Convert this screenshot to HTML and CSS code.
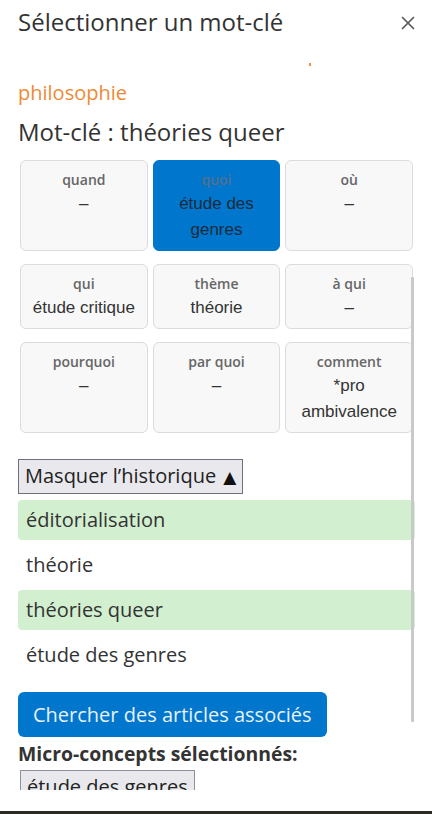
FILE: index.html
```html
<!DOCTYPE html>
<html lang="fr">
<head>
<meta charset="utf-8">
<title>Sélectionner un mot-clé</title>
<link rel="stylesheet" href="styles.css">
</head>
<body>
<div class="modal">
  <div class="header">
    <h1 class="title">Sélectionner un mot-clé</h1>
    <button class="close" aria-label="Fermer">
      <svg width="14" height="14" viewBox="0 0 14 14"><path d="M1.5 1.5 L12.5 12.5 M12.5 1.5 L1.5 12.5" stroke="#5a5a5a" stroke-width="1.7" stroke-linecap="round"/></svg>
    </button>
  </div>
  <div class="body">
    <div class="crumbs"><span class="dot"></span></div>
    <div class="parent">philosophie</div>
    <div class="keyword">Mot-clé : théories queer</div>
    <div class="grid">
      <div class="card"><div class="label">quand</div><div class="value">–</div></div>
      <div class="card selected"><div class="label">quoi</div><div class="value">étude des genres</div></div>
      <div class="card"><div class="label">où</div><div class="value">–</div></div>
      <div class="card"><div class="label">qui</div><div class="value">étude critique</div></div>
      <div class="card"><div class="label">thème</div><div class="value">théorie</div></div>
      <div class="card"><div class="label">à qui</div><div class="value">–</div></div>
      <div class="card"><div class="label">pourquoi</div><div class="value">–</div></div>
      <div class="card"><div class="label">par quoi</div><div class="value">–</div></div>
      <div class="card"><div class="label">comment</div><div class="value">*pro ambivalence</div></div>
    </div>
    <button class="toggle">Masquer l’historique <span class="tri">▲</span></button>
    <ul class="history">
      <li class="hit">éditorialisation</li>
      <li>théorie</li>
      <li class="hit">théories queer</li>
      <li>étude des genres</li>
    </ul>
    <button class="search">Chercher des articles associés</button>
    <div class="micro-title">Micro-concepts sélectionnés:</div>
    <div class="tags"><span class="tag">étude des genres</span></div>
  </div>
  <div class="scrollthumb"></div>
</div>
<div class="backdrop"></div>
</body>
</html>
```
FILE: styles.css
```css
html, body {
  margin: 0;
  padding: 0;
  background: #ffffff;
}
body {
  font-family: "Open Sans", "DejaVu Sans", sans-serif;
  color: #333333;
  width: 432px;
  height: 814px;
  overflow: hidden;
}
.modal {
  position: relative;
  height: 811px;
  background: #ffffff;
}
.header {
  display: flex;
  align-items: center;
  justify-content: space-between;
  padding: 5px 17px 0 18px;
}
.title {
  margin: 0;
  font-size: 24px;
  font-weight: 400;
  line-height: 34px;
  color: #333333;
}
.close {
  border: 0;
  background: transparent;
  padding: 0;
  width: 14px;
  height: 14px;
  display: flex;
  margin-top: 1px;
}
.body {
  padding: 0 17px 0 18px;
  height: 751px;
  overflow: hidden;
}
.crumbs {
  height: 39px;
  display: flex;
  align-items: flex-start;
}
.dot {
  display: block;
  width: 2px;
  height: 3px;
  background: #f0913f;
  margin: 24px 0 0 291px;
}
.parent {
  font-size: 20px;
  line-height: 30px;
  color: #ee8a37;
}
.keyword {
  margin-top: 7px;
  font-size: 24px;
  line-height: 34px;
  color: #333333;
}
.grid {
  margin: 11px 2px 0 2px;
  display: grid;
  grid-template-columns: repeat(3, 1fr);
  column-gap: 5px;
  row-gap: 13px;
}
.card {
  border: 1px solid #dcdcdc;
  border-radius: 6px;
  background: #f8f8f8;
  padding: 8px 4px 7px;
  text-align: center;
}
.label {
  font-family: "Open Sans", sans-serif;
  font-weight: 600;
  font-size: 14px;
  line-height: 22px;
  color: #666666;
}
.value {
  font-family: "Liberation Sans", Arial, sans-serif;
  font-size: 17px;
  line-height: 26px;
  color: #333333;
}
.card.selected {
  background: #0076cd;
  border-color: #0076cd;
}
.card.selected .label {
  color: #54708e;
}
.card.selected .value {
  color: #1b2b3c;
}
.toggle {
  display: block;
  margin-top: 26px;
  font-family: "Open Sans", sans-serif;
  font-size: 20px;
  line-height: 27px;
  color: #222222;
  background: #e9e9ed;
  border: 1px solid #70707a;
  border-radius: 0;
  padding: 2px 6px 2px 6px;
}
.tri {
  font-family: "DejaVu Sans", sans-serif;
  font-size: 17px;
  color: #111111;
  margin-left: 2px;
}
.history {
  list-style: none;
  margin: 6px 0 0 0;
  padding: 0;
  display: flex;
  flex-direction: column;
  gap: 5px;
}
.history li {
  font-size: 20px;
  line-height: 30px;
  padding: 5px 8px;
  border-radius: 4px;
  color: #333333;
}
.history li.hit {
  background: #d2efd0;
}
.search {
  display: block;
  margin-top: 17px;
  font-family: "Open Sans", sans-serif;
  font-size: 20px;
  line-height: 31px;
  padding: 7px 15px;
  border: 0;
  border-radius: 6px;
  background: #0076cd;
  color: #e8f1fb;
}
.micro-title {
  margin-top: 4px;
  font-size: 19.4px;
  font-weight: 700;
  line-height: 26px;
  color: #333333;
}
.tags {
  margin-top: 3px;
  padding-left: 2px;
}
.tag {
  display: inline-block;
  font-size: 20px;
  line-height: 27px;
  padding: 2px 6px;
  background: #e9e9ed;
  border: 1px solid #8f8f9d;
  color: #222222;
}
.scrollthumb {
  position: absolute;
  left: 411px;
  top: 277px;
  width: 3px;
  height: 445px;
  background: #c9c9c9;
  border-radius: 1px;
}
.backdrop {
  height: 3px;
  background: #2c2a22;
}
```
